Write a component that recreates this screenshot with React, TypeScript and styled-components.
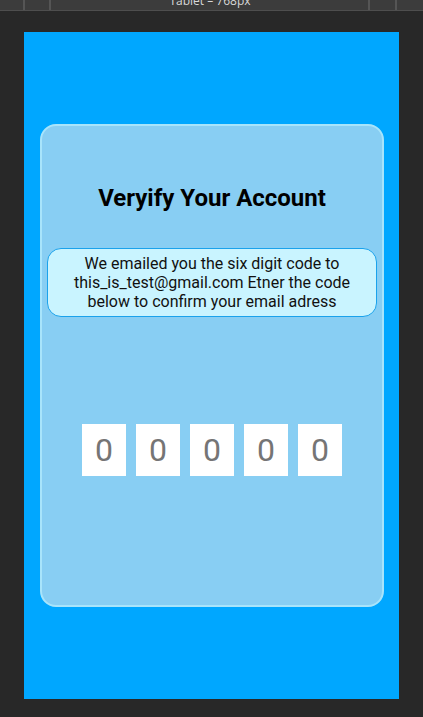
import React from "react";
import styled, { createGlobalStyle } from "styled-components";

const Global = createGlobalStyle`
  html, body { margin: 0; padding: 0; background: #282828; }
  body { font-family: Roboto, "Liberation Sans", sans-serif; }
`;

const Screen = styled.div`
  width: 423px;
  height: 717px;
  background: #282828;
  display: flex;
  flex-direction: column;
  overflow: hidden;
`;

const Toolbar = styled.div`
  height: 10px;
  background: #3c3c3c;
  border-bottom: 1px solid #4e4e4e;
  display: grid;
  grid-template-columns: 25px 26px 1fr 27px 26px;
  overflow: hidden;
`;

const ToolCell = styled.div<{ $divider?: boolean }>`
  border-right: ${(p) => (p.$divider ? "2px solid #555" : "none")};
  height: 10px;
`;

const ToolTitle = styled.div`
  border-right: 2px solid #555;
  color: #d8d8d8;
  font-family: "Open Sans", "Liberation Sans", sans-serif;
  font-size: 12px;
  line-height: 12px;
  text-align: center;
  margin-top: -5px;
  padding-left: 1px;
  height: 15px;
`;

const Stage = styled.div`
  flex: 1;
  padding: 21px 24px 18px 24px;
  display: flex;
`;

const Frame = styled.div`
  flex: 1;
  background: #00a7ff;
  padding: 92px 15px 0 16px;
  height: 667px;
  box-sizing: border-box;
`;

const Card = styled.div`
  height: 483px;
  box-sizing: border-box;
  background: #88cef3;
  border: 2px solid #a8e4fb;
  border-radius: 16px;
  padding: 57px 5px 0 5px;
  display: flex;
  flex-direction: column;
  align-items: center;
`;

const Title = styled.h1`
  margin: 0;
  font-family: Roboto, "Liberation Sans", sans-serif;
  font-weight: 700;
  font-size: 24px;
  line-height: 30px;
  color: #000;
`;

const Message = styled.p`
  margin: 35px 0 0 0;
  width: 100%;
  box-sizing: border-box;
  height: 69px;
  background: #c9f4ff;
  border: 1px solid #1aa2ec;
  border-radius: 14px;
  font-family: Roboto, "Liberation Sans", sans-serif;
  font-size: 16px;
  line-height: 19px;
  color: #111;
  text-align: center;
  padding: 5px 10px 0 10px;
`;

const CodeRow = styled.div`
  margin-top: 107px;
  display: flex;
  gap: 10px;
`;

const CodeBox = styled.div`
  width: 44px;
  height: 52px;
  background: #fff;
  display: flex;
  align-items: center;
  justify-content: center;
  font-family: Roboto, "Liberation Sans", sans-serif;
  font-size: 32px;
  color: #757575;
`;

export default function App() {
  const digits = ["0", "0", "0", "0", "0"];
  return (
    <>
      <Global />
      <Screen>
        <Toolbar>
          <ToolCell $divider />
          <ToolCell $divider />
          <ToolTitle>Tablet – 768px</ToolTitle>
          <ToolCell $divider />
          <ToolCell />
        </Toolbar>
        <Stage>
          <Frame>
            <Card>
              <Title>Veryify Your Account</Title>
              <Message>
                We emailed you the six digit code to this_is_test@gmail.com Etner the code below to confirm your email adress
              </Message>
              <CodeRow>
                {digits.map((d, i) => (
                  <CodeBox key={i}>{d}</CodeBox>
                ))}
              </CodeRow>
            </Card>
          </Frame>
        </Stage>
      </Screen>
    </>
  );
}
